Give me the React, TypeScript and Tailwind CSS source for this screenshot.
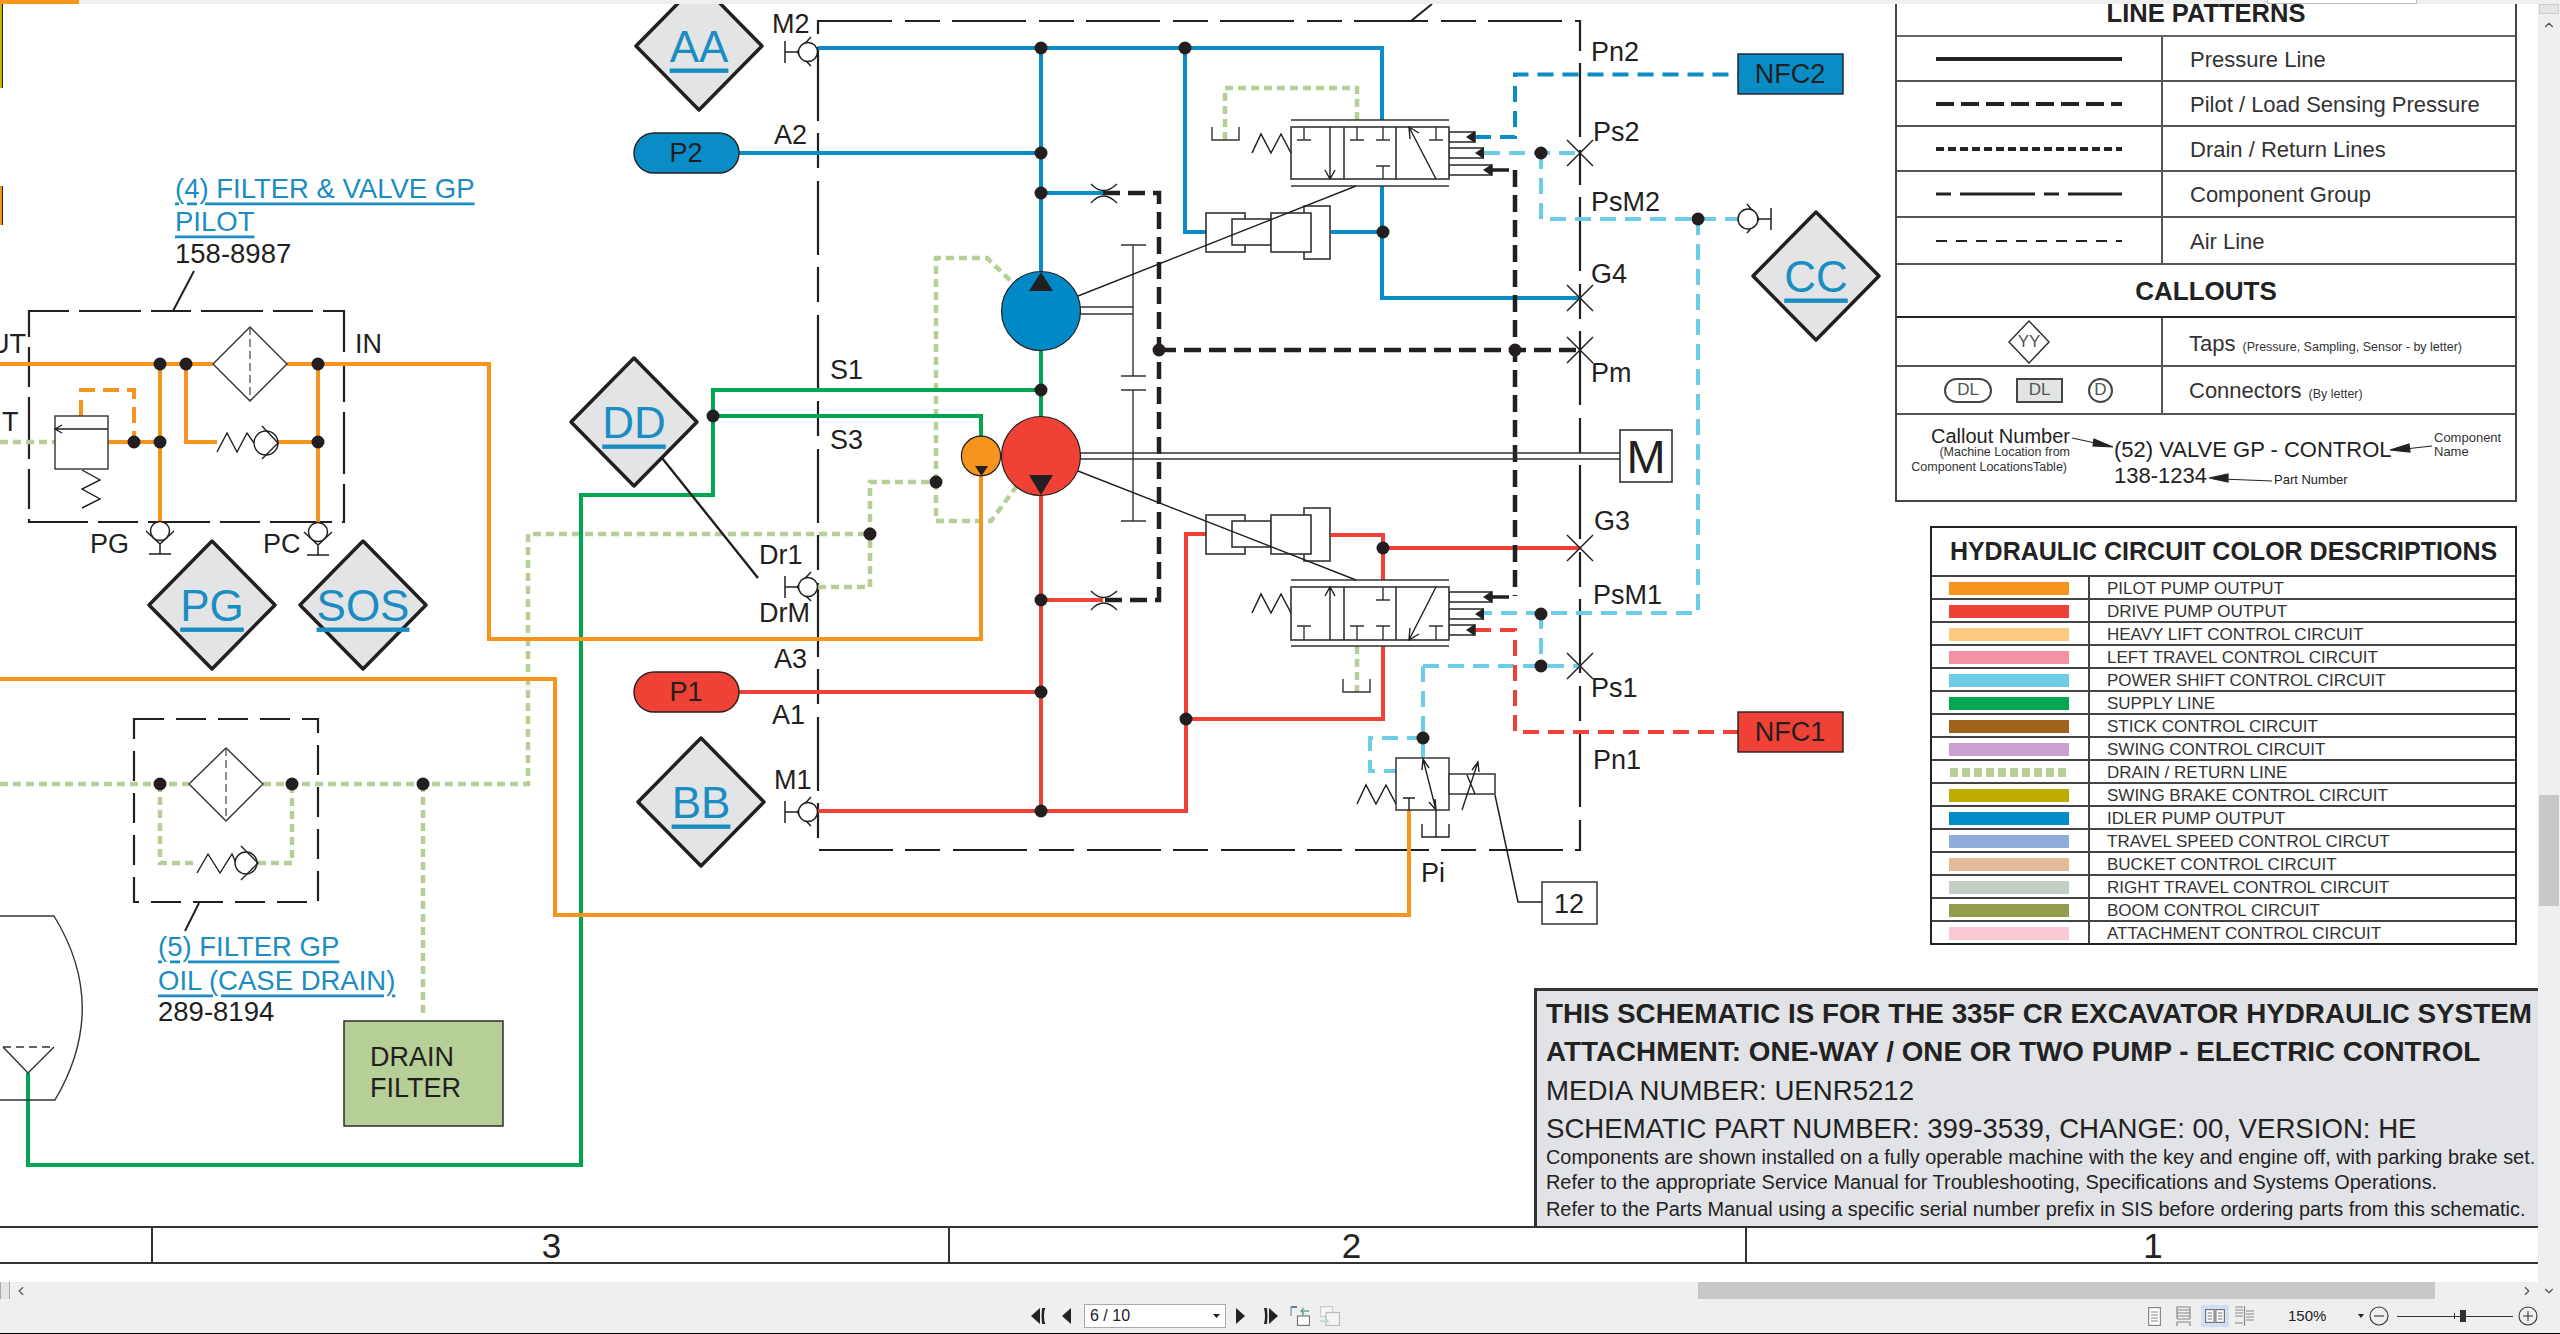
import React from "react";
import { ChevronLeft, ChevronRight, ChevronUp, ChevronDown } from "lucide-react";

const BLUE = "#0a8cc6";
const RED = "#ef4136";
const GREEN = "#00a651";
const ORANGE = "#f7941d";
const LTBLUE = "#6dcde6";
const DRAIN = "#b5cf96";
const INK = "#231f20";

type Grp = { c: string; w: number; d?: string; pts: string[] };
const groups: Grp[] = [
  { c: DRAIN, w: 4.5, d: "8 5", pts: ["0,784 189,784", "263,784 528,784 528,534 870,534", "818,587 870,587 870,482 936,482", "936,482 936,258 987,258 1013,283", "936,482 936,521 991,521 1016,487", "1225,140 1225,88 1357,88 1357,120", "1357,646 1357,692", "160,784 160,863 197,863", "258,863 292,863 292,784", "423,784 423,1018", "0,442 55,442"] },
  { c: GREEN, w: 4, pts: ["1041,350 1041,417", "1041,390 713,390 713,495 581,495 581,1165 28,1165 28,1073", "713,416 981,416 981,437"] },
  { c: ORANGE, w: 4, pts: ["0,679 555,679 555,915 1409,915 1409,810", "0,364 213,364", "287,364 489,364 489,639 981,639 981,476", "160,364 160,522", "318,364 318,522", "186,364 186,442 217,442", "278,442 318,442", "108,442 160,442"] },
  { c: ORANGE, w: 4, d: "16 8", pts: ["81,416 81,390 134,390 134,442"] },
  { c: BLUE, w: 4, pts: ["818,48 1382,48 1382,120", "1382,186 1382,298 1580,298", "1041,48 1041,272", "1185,48 1185,232 1206,232", "739,153 1041,153", "1041,193 1103,193", "1331,232 1383,232"] },
  { c: RED, w: 4, pts: ["1041,495 1041,811", "739,692 1041,692", "818,811 1186,811 1186,534 1206,534", "1186,719 1383,719 1383,646", "1383,580 1383,535 1331,535", "1383,548 1580,548", "1041,600 1103,600"] },
  { c: INK, w: 4.5, d: "17 8", pts: ["1103,193 1159,193 1159,600 1103,600", "1159,350 1580,350", "1515,170 1515,596"] },
  { c: BLUE, w: 4, d: "16 9", pts: ["1475,137 1515,137 1515,74.5 1738,74.5"] },
  { c: LTBLUE, w: 4, d: "16 9", pts: ["1484,153 1580,153", "1541,153 1541,219 1698,219 1738,219", "1698,219 1698,613 1484,613", "1541,613 1541,666", "1423,666 1580,666", "1423,666 1423,758", "1423,738 1370,738 1370,771 1396,771"] },
  { c: RED, w: 4, d: "16 9", pts: ["1475,630 1515,630 1515,732 1738,732"] },
];

const dots: [number, number][] = [
  [1041, 48], [1185, 48], [1041, 153], [1041, 193], [1383, 232], [1041, 390], [713, 416], [936, 482], [870, 534], [1159, 350], [1515, 350],
  [1541, 153], [1698, 219], [1383, 548], [1041, 600], [1041, 692], [1041, 811], [1186, 719], [1541, 614], [1541, 666], [1423, 738],
  [160, 364], [186, 364], [318, 364], [134, 442], [160, 442], [318, 442], [160, 784], [292, 784], [423, 784],
];

const Dot = ({ x, y }: { x: number; y: number }) => <circle cx={x} cy={y} r={6.5} fill={INK} />;

const Lbl = ({ x, y, children, a }: { x: number; y: number; children: React.ReactNode; a?: "middle" }) => (
  <text x={x} y={y} dominantBaseline="central" textAnchor={a} className="text-[27px] fill-[#231f20]">{children}</text>
);

const LinkT = ({ x, y, children }: { x: number; y: number; children: React.ReactNode }) => (
  <text x={x} y={y} dominantBaseline="central" className="text-[27.5px] fill-[#1b8dc2] underline">{children}</text>
);

const Diamond = ({ x, y, t }: { x: number; y: number; t: string }) => (
  <g>
    <polygon points={`${x - 63},${y} ${x},${y - 64} ${x + 63},${y} ${x},${y + 64}`} fill="#e3e4e6" stroke={INK} strokeWidth={3.5} strokeLinejoin="round" />
    <text x={x} y={y} dominantBaseline="central" textAnchor="middle" className="text-[44px] fill-[#1b8dc2] underline decoration-[3px]">{t}</text>
  </g>
);

const Cross = ({ x, y }: { x: number; y: number }) => (
  <path d={`M${x - 13} ${y - 13}L${x + 13} ${y + 13}M${x + 13} ${y - 13}L${x - 13} ${y + 13}`} stroke={INK} strokeWidth={1.5} fill="none" />
);

const Orifice = ({ x, y }: { x: number; y: number }) => (
  <path d={`M${x - 12} ${y - 9}Q${x} ${y + 4} ${x + 14} ${y - 9}M${x - 12} ${y + 10}Q${x} ${y - 4} ${x + 14} ${y + 10}`} stroke={INK} strokeWidth={1.3} fill="#fff" />
);

const Spring = ({ x, y }: { x: number; y: number }) => (
  <polyline points={`${x},${y} ${x + 9},${y - 19} ${x + 19},${y} ${x + 29},${y - 19} ${x + 39},${y}`} fill="none" stroke={INK} strokeWidth={1.5} />
);

const GaugePortL = ({ y }: { y: number }) => (
  <g fill="none" stroke={INK} strokeWidth={1.5}>
    <path d={`M785 ${y - 11}V${y + 11}M785 ${y}H797M811 ${y - 15}L797 ${y}L811 ${y + 14}`} />
    <circle cx={808} cy={y} r={9.5} fill="#fff" />
  </g>
);

const GaugePortB = ({ x, y }: { x: number; y: number }) => (
  <g fill="none" stroke={INK} strokeWidth={1.5}>
    <path d={`M${x - 14} ${y}L${x} ${y + 13}L${x + 14} ${y}M${x} ${y + 13}V${y + 23}M${x - 11} ${y + 23}H${x + 11}`} />
    <circle cx={x} cy={y} r={9.5} fill="#fff" />
  </g>
);

const Head = ({ x, y, len = 9 }: { x: number; y: number; len?: number }) => (
  <polygon points={`${x},${y} ${x + len},${y - 6} ${x + len},${y + 6}`} fill={INK} />
);

const Actuator = ({ y }: { y: number }) => (
  <g fill="#fff" stroke="#333" strokeWidth={1.6}>
    <rect x={1304} y={y - 7} width={26} height={53} />
    <rect x={1206} y={y} width={39} height={39} />
    <rect x={1232} y={y + 6} width={39} height={26} />
    <rect x={1271} y={y} width={40} height={39} />
  </g>
);

const T = ({ x, y1, y2 }: { x: number; y1: number; y2: number }) => (
  <path d={`M${x} ${y1}V${y2}M${x - 7} ${y2}H${x + 7}`} fill="none" stroke="#333" strokeWidth={1.4} />
);

const Tank = ({ x, y, w = 27, h = 13 }: { x: number; y: number; w?: number; h?: number }) => (
  <polyline points={`${x},${y} ${x},${y + h} ${x + w},${y + h} ${x + w},${y}`} fill="none" stroke="#333" strokeWidth={1.4} />
);

function Schematic() {
  return (
    <svg viewBox="0 4 2538 1222" className="absolute inset-0 w-[2538px] h-[1222px]">
      <rect x={818} y={21} width={762} height={829} fill="none" stroke={INK} strokeWidth={2.2} strokeDasharray="74 13 35 12" />
      <path d="M1411 21L1432 4" stroke={INK} strokeWidth={2} />
      <rect x={29} y={311} width={315} height={211} fill="none" stroke={INK} strokeWidth={2.2} strokeDasharray="40 10 62 10" />
      <path d="M194 271L173 311" stroke={INK} strokeWidth={2} />
      <rect x={134} y={719} width={184} height={183} fill="none" stroke={INK} strokeWidth={2.2} strokeDasharray="30 12" />
      <path d="M199 903L185 931" stroke={INK} strokeWidth={2} />

      {groups.map((g, i) => (
        <g key={i} fill="none" stroke={g.c} strokeWidth={g.w} strokeDasharray={g.d}>
          {g.pts.map((p, j) => <polyline key={j} points={p} />)}
        </g>
      ))}

      {/* shafts & gears */}
      <g stroke="#333" strokeWidth={1.4} fill="none">
        <path d="M1080 307H1133M1080 314H1133M1133 245V376M1121 245H1146M1121 376H1146M1121 390H1146M1133 390V521M1121 521H1146" />
        <path d="M1080 453H1620M1080 459H1620" />
      </g>

      {/* pumps */}
      <circle cx={1041} cy={311} r={39.5} fill="#0089c6" stroke={INK} strokeWidth={1.2} />
      <polygon points="1041,272 1029,291 1053,291" fill={INK} />
      <ellipse cx={981} cy={456} rx={19.6} ry={19.8} fill={ORANGE} stroke={INK} strokeWidth={1.2} />
      <polygon points="975,466 988,466 981.5,476" fill={INK} />
      <circle cx={1041} cy={456} r={39.5} fill={RED} stroke={INK} strokeWidth={1.2} />
      <polygon points="1041,495 1029,475 1053,475" fill={INK} />

      {/* M */}
      <rect x={1620} y={430} width={52} height={52} fill="#fff" stroke="#333" strokeWidth={1.6} />
      <text x={1646} y={456} dominantBaseline="central" textAnchor="middle" className="text-[47px] fill-[#231f20]">M</text>

      {/* valves */}
      <g fill="#fff" stroke="#333" strokeWidth={1.6}>
        <rect x={1449} y={132} width={26} height={10} />
        <rect x={1449} y={148} width={34} height={10} />
        <rect x={1449} y={165} width={43} height={10} />
        <rect x={1291} y={127} width={158} height={52} />
        <path d="M1291 120H1449M1291 186H1449M1344 127V179M1396 127V179" fill="none" />
        <rect x={1449} y={592} width={43} height={10} />
        <rect x={1449} y={609} width={34} height={10} />
        <rect x={1449} y={625} width={26} height={10} />
        <rect x={1291} y={587} width={158} height={53} />
        <path d="M1291 580H1449M1291 646H1449M1344 587V640M1396 587V640" fill="none" />
      </g>
      <T x={1304} y1={127} y2={140} /><T x={1357} y1={127} y2={140} /><T x={1383} y1={127} y2={140} /><T x={1436} y1={127} y2={140} />
      <T x={1383} y1={179} y2={166} />
      <path d="M1330 127V179M1325 170L1330 179L1335 170M1436 179L1409 127M1410 139L1409 127L1419 133" fill="none" stroke={INK} strokeWidth={1.4} />
      <T x={1304} y1={640} y2={626} /><T x={1357} y1={640} y2={626} /><T x={1383} y1={640} y2={626} /><T x={1436} y1={640} y2={626} />
      <T x={1383} y1={587} y2={600} />
      <path d="M1330 640V587M1325 596L1330 587L1335 596M1436 587L1409 640M1410 628L1409 640L1419 634" fill="none" stroke={INK} strokeWidth={1.4} />
      <Spring x={1252} y={153} /><Spring x={1252} y={613} />
      <Head x={1466} y={137} /><Head x={1475} y={153} /><Head x={1483} y={170} />
      <Head x={1483} y={597} /><Head x={1475} y={614} /><Head x={1466} y={630} />
      <path d="M1490 170H1509M1490 597H1509" stroke={INK} strokeWidth={3.5} />
      <Tank x={1212} y={127} /><Tank x={1343} y={679} />

      <Actuator y={213} /><Actuator y={515} />
      {/* leaders from pumps to valves run over the actuators */}
      <path d="M1356 186L1078 296M1356 580L1078 471" stroke={INK} strokeWidth={1.4} fill="none" />

      {/* pilot valve */}
      <rect x={1396} y={758} width={53} height={52} fill="#fff" stroke="#333" strokeWidth={1.5} />
      <rect x={1449} y={774} width={46} height={20} fill="#fff" stroke="#333" strokeWidth={1.5} />
      <Spring x={1357} y={804} />
      <path d="M1423 759L1436 810M1422 770L1423 759L1429 768M1435 799L1436 810L1429 802M1409 810V798M1403 798H1415M1436 810V837M1422 824V837H1449V824M1462 810L1478 762M1472 770L1478 762L1479 772M1467 775L1475 794" fill="none" stroke={INK} strokeWidth={1.4} />
      <polyline points="1495,795 1518,902 1542,902" fill="none" stroke={INK} strokeWidth={1.5} />
      <rect x={1542} y={882} width={55} height={42} fill="#fff" stroke="#333" strokeWidth={1.5} />
      <text x={1569} y={904} dominantBaseline="central" textAnchor="middle" className="text-[27px] fill-[#231f20]">12</text>

      {/* crosses, orifices, ports */}
      <Cross x={1580} y={153} /><Cross x={1580} y={298} /><Cross x={1580} y={350} /><Cross x={1580} y={548} /><Cross x={1580} y={666} />
      <Orifice x={1103} y={193} /><Orifice x={1103} y={600} />
      <GaugePortL y={52} /><GaugePortL y={587} /><GaugePortL y={812} />
      <GaugePortB x={160} y={531} /><GaugePortB x={318} y={532} />
      <g fill="none" stroke={INK} strokeWidth={1.5}>
        <path d="M1747 204L1759 219L1747 233M1759 219H1771M1771 208V230" />
        <circle cx={1748} cy={219} r={10} fill="#fff" />
      </g>

      {/* filter upper */}
      <polygon points="213,364 250,327 287,364 250,401" fill="#fff" stroke="#333" strokeWidth={1.4} />
      <path d="M250 327V401" stroke="#444" strokeWidth={1.2} strokeDasharray="8 4" />
      <polyline points="217,452 227,433 237,452 247,433 254,443" fill="none" stroke={INK} strokeWidth={1.4} />
      <circle cx={266} cy={443} r={12} fill="#fff" stroke={INK} strokeWidth={1.4} />
      <polyline points="262,426 278,443 262,459" fill="none" stroke={INK} strokeWidth={1.4} />
      <rect x={55} y={416} width={53} height={53} fill="#fff" stroke="#333" strokeWidth={1.4} />
      <path d="M55 429H108M62 425L55 429L62 433" fill="none" stroke={INK} strokeWidth={1.4} />
      <polyline points="82,470 100,480 82,489 100,499 82,508" fill="none" stroke={INK} strokeWidth={1.4} />

      {/* filter lower */}
      <polygon points="189,784 226,748 263,784 226,821" fill="#fff" stroke="#333" strokeWidth={1.4} />
      <path d="M226 748V821" stroke="#444" strokeWidth={1.2} strokeDasharray="8 4" />
      <polyline points="197,873 208,854 220,873 232,854 236,863" fill="none" stroke={INK} strokeWidth={1.4} />
      <circle cx={246} cy={863} r={11} fill="#fff" stroke={INK} strokeWidth={1.4} />
      <polyline points="241,846 258,863 241,880" fill="none" stroke={INK} strokeWidth={1.4} />

      {/* tank */}
      <path d="M0 916H54Q110 1007 55 1100H0" fill="none" stroke="#333" strokeWidth={1.4} />
      <path d="M3 1047H54" stroke="#333" strokeWidth={1.4} strokeDasharray="8 5" />
      <polyline points="3,1047 28,1073 54,1047" fill="none" stroke="#333" strokeWidth={1.4} />

      {dots.map(([x, y], i) => <Dot key={i} x={x} y={y} />)}

      {/* diamonds */}
      <path d="M662 458L758 578" stroke={INK} strokeWidth={2.4} />
      <Diamond x={699} y={46} t="AA" />
      <Diamond x={701} y={802} t="BB" />
      <Diamond x={634} y={422} t="DD" />
      <Diamond x={212} y={605} t="PG" />
      <Diamond x={363} y={605} t="SOS" />
      <Diamond x={1816} y={276} t="CC" />

      {/* pills & boxes */}
      <rect x={634} y={133} width={105} height={40} rx={20} fill={BLUE} stroke={INK} strokeWidth={1.4} />
      <Lbl x={686} y={153} a="middle">P2</Lbl>
      <rect x={634} y={672} width={105} height={40} rx={20} fill={RED} stroke={INK} strokeWidth={1.4} />
      <Lbl x={686} y={692} a="middle">P1</Lbl>
      <rect x={1738} y={54} width={105} height={40} fill={BLUE} stroke={INK} strokeWidth={1.4} />
      <text x={1790} y={74} dominantBaseline="central" textAnchor="middle" className="text-[27px] fill-[#231f20]">NFC2</text>
      <rect x={1738} y={712} width={105} height={40} fill={RED} stroke={INK} strokeWidth={1.4} />
      <text x={1790} y={732} dominantBaseline="central" textAnchor="middle" className="text-[27px] fill-[#231f20]">NFC1</text>
      <rect x={344} y={1021} width={159} height={105} fill="#b5cf96" stroke={INK} strokeWidth={1.4} />
      <text x={370} y={1057} dominantBaseline="central" className="text-[27px] fill-[#231f20]">DRAIN</text>
      <text x={370} y={1088} dominantBaseline="central" className="text-[27px] fill-[#231f20]">FILTER</text>

      {/* labels */}
      <Lbl x={772} y={24}>M2</Lbl><Lbl x={774} y={135}>A2</Lbl><Lbl x={830} y={370}>S1</Lbl><Lbl x={830} y={440}>S3</Lbl>
      <Lbl x={759} y={555}>Dr1</Lbl><Lbl x={759} y={613}>DrM</Lbl><Lbl x={774} y={659}>A3</Lbl><Lbl x={772} y={715}>A1</Lbl><Lbl x={774} y={780}>M1</Lbl>
      <Lbl x={1591} y={52}>Pn2</Lbl><Lbl x={1593} y={132}>Ps2</Lbl><Lbl x={1591} y={202}>PsM2</Lbl><Lbl x={1591} y={274}>G4</Lbl>
      <Lbl x={1591} y={373}>Pm</Lbl><Lbl x={1594} y={521}>G3</Lbl><Lbl x={1593} y={595}>PsM1</Lbl><Lbl x={1591} y={688}>Ps1</Lbl>
      <Lbl x={1593} y={760}>Pn1</Lbl><Lbl x={1421} y={873}>Pi</Lbl>
      <Lbl x={90} y={544}>PG</Lbl><Lbl x={263} y={544}>PC</Lbl><Lbl x={355} y={344}>IN</Lbl>
      <Lbl x={-10} y={344}>UT</Lbl><Lbl x={2} y={422}>T</Lbl>

      <LinkT x={175} y={188}>(4) FILTER &amp; VALVE GP</LinkT>
      <LinkT x={175} y={221}>PILOT</LinkT>
      <text x={175} y={253} dominantBaseline="central" className="text-[27.5px] fill-[#231f20]">158-8987</text>
      <LinkT x={158} y={946}>(5) FILTER GP</LinkT>
      <LinkT x={158} y={980}>OIL (CASE DRAIN)</LinkT>
      <text x={158} y={1011} dominantBaseline="central" className="text-[27.5px] fill-[#231f20]">289-8194</text>
    </svg>
  );
}

const patterns = [
  { name: "Pressure Line", d: undefined as string | undefined, w: 4, h: "h-[45px]" },
  { name: "Pilot / Load Sensing Pressure", d: "18 7", w: 4, h: "h-[45px]" },
  { name: "Drain / Return Lines", d: "8 4", w: 4, h: "h-[45px]" },
  { name: "Component Group", d: "15 9 75 9", w: 3, h: "h-[46px]" },
  { name: "Air Line", d: "11 9", w: 2, h: "h-[47px]" },
];

function LinePatterns() {
  return (
    <div className="mr-[21px] w-[622px] border-x-2 border-b-2 border-[#444] bg-white text-[#333]">
      <div className="h-[33px] border-b-2 border-[#666] flex justify-center text-[25.5px] leading-[18px] font-bold text-[#222]">LINE PATTERNS</div>
      {patterns.map((p) => (
        <div key={p.name} className={`${p.h} flex border-b-2 border-[#555]`}>
          <div className="w-[266px] border-r-2 border-[#555] flex items-center pl-[39px]">
            <svg width="186" height="6"><line x1="0" x2="186" y1="3" y2="3" stroke="#222" strokeWidth={p.w} strokeDasharray={p.d} /></svg>
          </div>
          <div className="pl-[27px] pt-[1px] flex items-center text-[22px]">{p.name}</div>
        </div>
      ))}
      <div className="h-[53px] border-b-2 border-[#222] flex items-center justify-center pt-[2px] text-[26px] font-bold text-[#222]">CALLOUTS</div>
      <div className="h-[49px] flex border-b-2 border-[#555]">
        <div className="w-[266px] border-r-2 border-[#555] flex items-center justify-center">
          <div className="relative w-[42px] h-[44px] flex items-center justify-center">
            <svg width="42" height="44" className="absolute inset-0"><polygon points="21,1 41,22 21,43 1,22" fill="#fff" stroke="#333" strokeWidth="1.5" /></svg>
            <span className="relative text-[17px] text-[#555]">YY</span>
          </div>
        </div>
        <div className="pl-[26px] flex items-baseline pt-[9px] text-[22px]">Taps<span className="ml-[7px] text-[12.5px]">(Pressure, Sampling, Sensor - by letter)</span></div>
      </div>
      <div className="h-[48px] flex border-b-2 border-[#555]">
        <div className="w-[266px] border-r-2 border-[#555] flex items-center pl-[47px] text-[17px] text-[#555]">
          <div className="w-[48px] h-[25px] rounded-full border-2 border-[#444] flex items-center justify-center">DL</div>
          <div className="ml-[24px] w-[47px] h-[25px] bg-[#e3e4e6] border-2 border-[#444] flex items-center justify-center">DL</div>
          <div className="ml-[25px] w-[25px] h-[25px] rounded-full border-2 border-[#444] flex items-center justify-center">D</div>
        </div>
        <div className="pl-[26px] flex items-baseline pt-[7px] text-[22px]">Connectors<span className="ml-[7px] text-[12.5px]">(By letter)</span></div>
      </div>
      <div className="relative h-[85px] flex">
        <div className="w-[173px] pt-[11px] text-right">
          <div className="text-[20px] leading-[20px] text-[#222]">Callout Number</div>
          <div className="mt-[-1px] text-[12.5px] leading-[15px]">(Machine Location from</div>
          <div className="text-[12.5px] leading-[15px] whitespace-nowrap pr-[3px]">Component LocationsTable)</div>
        </div>
        <div className="ml-[44px] w-[320px] pt-[22px] text-[22px] leading-[26px] text-[#222]">
          <div className="whitespace-nowrap">(52) VALVE GP - CONTROL</div>
          <div className="flex whitespace-nowrap">138-1234<span className="relative top-[4px] ml-[67px] text-[13px]">Part Number</span></div>
        </div>
        <div className="pt-[16px] text-[13px] leading-[14px]">
          <div>Component</div>
          <div>Name</div>
        </div>
        <svg viewBox="1897 415 618 85" className="absolute inset-0 w-[618px] h-[85px]" fill="none" stroke="#222" strokeWidth="1.2">
          <path d="M2072 438L2100 444" /><polygon points="2113,447 2094,439 2093,446" fill="#222" />
          <path d="M2432 446L2405 449" /><polygon points="2390,450 2409,444 2410,452" fill="#222" />
          <path d="M2272 481L2222 479" /><polygon points="2209,478 2228,474 2228,482" fill="#222" />
        </svg>
      </div>
    </div>
  );
}

const circuits: { n: string; c: string; drain?: boolean }[] = [
  { n: "PILOT PUMP OUTPUT", c: "bg-[#f7941d]" },
  { n: "DRIVE PUMP OUTPUT", c: "bg-[#ef4136]" },
  { n: "HEAVY LIFT CONTROL CIRCUIT", c: "bg-[#fdc981]" },
  { n: "LEFT TRAVEL CONTROL CIRCUIT", c: "bg-[#f490a3]" },
  { n: "POWER SHIFT CONTROL CIRCUIT", c: "bg-[#6dcde6]" },
  { n: "SUPPLY LINE", c: "bg-[#00a651]" },
  { n: "STICK CONTROL CIRCUIT", c: "bg-[#a0631b]" },
  { n: "SWING CONTROL CIRCUIT", c: "bg-[#c9a0cf]" },
  { n: "DRAIN / RETURN LINE", c: "", drain: true },
  { n: "SWING BRAKE CONTROL CIRCUIT", c: "bg-[#bfac00]" },
  { n: "IDLER PUMP OUTPUT", c: "bg-[#008bc9]" },
  { n: "TRAVEL SPEED CONTROL CIRCUT", c: "bg-[#8fadd9]" },
  { n: "BUCKET CONTROL CIRCUIT", c: "bg-[#e4bb99]" },
  { n: "RIGHT TRAVEL CONTROL CIRCUIT", c: "bg-[#c3cfc2]" },
  { n: "BOOM CONTROL CIRCUIT", c: "bg-[#939d4c]" },
  { n: "ATTACHMENT CONTROL CIRCUIT", c: "bg-[#fbc9d4]" },
];

function ColorTable() {
  return (
    <div className="mt-[24px] mr-[21px] w-[587px] border-2 border-[#222] bg-white text-[#333]">
      <div className="h-[49px] border-b-2 border-[#444] flex items-center justify-center text-[25px] font-bold text-[#222]">HYDRAULIC CIRCUIT COLOR DESCRIPTIONS</div>
      {circuits.map((r) => (
        <div key={r.n} className="h-[23px] flex border-b-2 border-[#444] last:border-b-0 last:h-[21px]">
          <div className="w-[158px] shrink-0 border-r-2 border-[#444] flex items-center pl-[17px] pt-[1px]">
            {r.drain ? (
              <div className="w-[120px] h-[9px] flex gap-[4px] pl-[1px]">
                {Array.from({ length: 10 }).map((_, i) => <div key={i} className="w-[8px] h-[9px] bg-[#b5cf96]" />)}
              </div>
            ) : (
              <div className={`w-[120px] h-[13px] ${r.c}`} />
            )}
          </div>
          <div className="pl-[17px] pt-[2px] flex items-center text-[17px] leading-none whitespace-nowrap">{r.n}</div>
        </div>
      ))}
    </div>
  );
}

function TitleBlock() {
  return (
    <div className="mt-auto w-[1004px] h-[238px] bg-[#e2e3e6] border-l-[3px] border-t-[3px] border-[#333] pl-[9px] pt-[4px] text-[#222] whitespace-nowrap">
      <div className="text-[27.8px] leading-[38px] font-bold">THIS SCHEMATIC IS FOR THE 335F CR EXCAVATOR HYDRAULIC SYSTEM</div>
      <div className="text-[27.8px] leading-[38px] font-bold">ATTACHMENT: ONE-WAY / ONE OR TWO PUMP - ELECTRIC CONTROL</div>
      <div className="text-[27.6px] leading-[40px]">MEDIA NUMBER: UENR5212</div>
      <div className="text-[27.6px] leading-[36px]">SCHEMATIC PART NUMBER: 399-3539, CHANGE: 00, VERSION: HE</div>
      <div className="text-[19.9px] leading-[20px]">Components are shown installed on a fully operable machine with the key and engine off, with parking brake set.</div>
      <div className="text-[19.9px] leading-[30px]">Refer to the appropriate Service Manual for Troubleshooting, Specifications and Systems Operations.</div>
      <div className="text-[19.9px] leading-[24px]">Refer to the Parts Manual using a specific serial number prefix in SIS before ordering parts from this schematic.</div>
    </div>
  );
}

const PageIcon = ({ kind }: { kind: number }) => {
  if (kind === 0)
    return (
      <svg width="13" height="19" viewBox="0 0 13 19" fill="none" stroke="#888" strokeWidth="1.2">
        <rect x="0.6" y="0.6" width="11.8" height="17.8" fill="#fff" />
        <path d="M3 5H10M3 8H10M3 11H10M3 14H10" />
      </svg>
    );
  if (kind === 1)
    return (
      <svg width="15" height="20" viewBox="0 0 15 20" fill="none" stroke="#888" strokeWidth="1.2">
        <path d="M1 13V1H14V13M1 13H14M1 4H14M1 7H14M1 10H14M1 16H14V20M1 16V20" />
      </svg>
    );
  if (kind === 2)
    return (
      <div className="w-[28px] h-[22px] bg-[#cfe0f5] flex items-center justify-center">
        <svg width="20" height="14" viewBox="0 0 20 14" fill="none" stroke="#777" strokeWidth="1.2">
          <rect x="0.6" y="0.6" width="8.5" height="12.8" fill="#fff" />
          <rect x="10.9" y="0.6" width="8.5" height="12.8" fill="#fff" />
          <path d="M2.5 4H7M2.5 7H7M2.5 10H7M13 4H17.5M13 7H17.5M13 10H17.5" />
        </svg>
      </div>
    );
  return (
    <svg width="19" height="20" viewBox="0 0 19 20" fill="none" stroke="#888" strokeWidth="1.2">
      <path d="M9.5 0V20M0 1H8M0 4H8M0 7H8M0 10H8M11 5H19M11 8H19M11 11H19M11 14H19M0 17H8" />
    </svg>
  );
};

function Toolbar() {
  return (
    <div className="h-[35px] shrink-0 bg-[#efefef] border-b border-black flex items-center text-[#222]">
      <svg className="ml-[1031px]" width="16" height="16" viewBox="0 0 16 16" fill="#222"><polygon points="0,8 9,0 9,16" /><path d="M11 0h3q-2 8 0 16h-3q-1-8 0-16z" /></svg>
      <svg className="ml-[15px]" width="9" height="16" viewBox="0 0 9 16" fill="#222"><polygon points="0,8 9,0 9,16" /></svg>
      <div className="ml-[13px] w-[142px] h-[24px] bg-white border border-[#aaa] flex items-center pl-[5px] pr-[5px] text-[16px] justify-between">
        <span>6 / 10</span>
        <svg width="7" height="4" viewBox="0 0 7 4" fill="#222"><polygon points="0,0 7,0 3.5,4" /></svg>
      </div>
      <svg className="ml-[10px]" width="9" height="16" viewBox="0 0 9 16" fill="#222"><polygon points="9,8 0,0 0,16" /></svg>
      <svg className="ml-[17px]" width="16" height="16" viewBox="0 0 16 16" fill="#222"><path d="M2 0h3q1 8 0 16H2q2-8 0-16z" /><polygon points="16,8 7,0 7,16" /></svg>
      <svg className="ml-[12px]" width="20" height="20" viewBox="0 0 20 20" fill="none" strokeWidth="1.2">
        <path d="M1 1H7" stroke="#5b7fa8" strokeWidth="2" /><path d="M1 1V10" stroke="#888" />
        <rect x="7.5" y="10" width="12" height="9.4" fill="#fff" stroke="#777" />
        <path d="M19 5H11M14 2L11 5L14 8M13 5V10" stroke="#6aa78a" strokeWidth="1.4" />
      </svg>
      <svg className="ml-[10px]" width="20" height="20" viewBox="0 0 20 20" fill="none" strokeWidth="1.2">
        <rect x="0.6" y="0.6" width="12" height="10" stroke="#ccc" fill="#f5f5f5" />
        <rect x="6" y="6.5" width="13.4" height="13" stroke="#bbb" fill="#f5f5f5" />
        <path d="M0 15H8M5 12L8 15L5 18" stroke="#bcd6c6" strokeWidth="1.4" />
      </svg>
      <div className="ml-[808px]"><PageIcon kind={0} /></div>
      <div className="ml-[15px]"><PageIcon kind={1} /></div>
      <div className="ml-[10px]"><PageIcon kind={2} /></div>
      <div className="ml-[6px]"><PageIcon kind={3} /></div>
      <span className="ml-[34px] w-[39px] text-[15px] whitespace-nowrap">150%</span>
      <svg className="ml-[31px]" width="6" height="4" viewBox="0 0 6 4" fill="#222"><polygon points="0,0 6,0 3,4" /></svg>
      <svg className="ml-[5px]" width="20" height="20" viewBox="0 0 20 20" fill="none" stroke="#333" strokeWidth="1.1"><circle cx="10" cy="10" r="9" /><path d="M5 10H15" /></svg>
      <div className="ml-[8px] relative w-[116px] h-[14px] flex items-center">
        <div className="w-full h-px bg-[#333]" />
        <div className="absolute left-[57px] top-[4px] w-px h-[6px] bg-[#333]" />
        <div className="absolute left-[63px] top-[1px] w-[6px] h-[12px] bg-[#333]" />
      </div>
      <svg className="ml-[5px]" width="20" height="20" viewBox="0 0 20 20" fill="none" stroke="#333" strokeWidth="1.1"><circle cx="10" cy="10" r="9" /><path d="M5 10H15M10 5V15" /></svg>
    </div>
  );
}

export default function App() {
  return (
    <div className="w-[2560px] h-[1334px] flex flex-col overflow-hidden bg-white font-['Liberation_Sans',Arial,sans-serif]">
      <div className="h-[4px] shrink-0 bg-[#efefef] flex">
        <div className="w-[79px] bg-[#f7941d]" />
        <div className="ml-[2188px] w-[150px] bg-white border-x border-b border-[#bbb]" />
      </div>
      <div className="flex-1 min-h-0 flex">
        <div className="w-[2538px] flex flex-col">
          <div className="relative h-[1222px] bg-white overflow-hidden">
            <Schematic />
            <div className="absolute left-0 top-0 w-[3px] h-[84px] bg-[#c6b600] border-r border-[#222]" />
            <div className="absolute left-0 top-[182px] w-[3px] h-[39px] bg-[#f7941d] border-r border-[#222]" />
            <div className="relative h-full flex flex-col items-end">
              <LinePatterns />
              <ColorTable />
              <TitleBlock />
            </div>
          </div>
          <div className="h-[38px] shrink-0 bg-white border-y-2 border-[#333] grid grid-cols-[153px_797px_797px_791px] text-[35px] leading-none text-[#222]">
            <div className="border-r-2 border-[#333]" />
            <div className="border-r-2 border-[#333] flex items-center justify-center pl-[2px]">3</div>
            <div className="border-r-2 border-[#333] flex items-center justify-center pl-[8px]">2</div>
            <div className="flex items-center justify-center pl-[21px]">1</div>
          </div>
          <div className="h-[18px] shrink-0 bg-white" />
          <div className="h-[17px] shrink-0 bg-[#efefef] flex items-center text-[#555]">
            <div className="w-[10px] h-full border-x border-[#aaa] bg-[#e4e4e4]" />
            <ChevronLeft className="ml-[4px]" size={14} strokeWidth={2} />
            <div className="ml-[1670px] w-[737px] h-full bg-[#c8c8c8]" />
            <ChevronRight className="ml-[85px]" size={14} strokeWidth={2} />
          </div>
        </div>
        <div className="w-[22px] shrink-0 bg-[#efefef] flex flex-col items-center text-[#555]">
          <div className="w-[20px] h-[10px] bg-[#e4e4e4] border border-[#ccc]" />
          <ChevronUp className="mt-[4px]" size={14} strokeWidth={2} />
          <div className="mt-[763px] w-[20px] h-[111px] bg-[#c8c8c8]" />
          <ChevronDown className="mt-auto mb-[1px]" size={14} strokeWidth={2} />
        </div>
      </div>
      <Toolbar />
    </div>
  );
}
